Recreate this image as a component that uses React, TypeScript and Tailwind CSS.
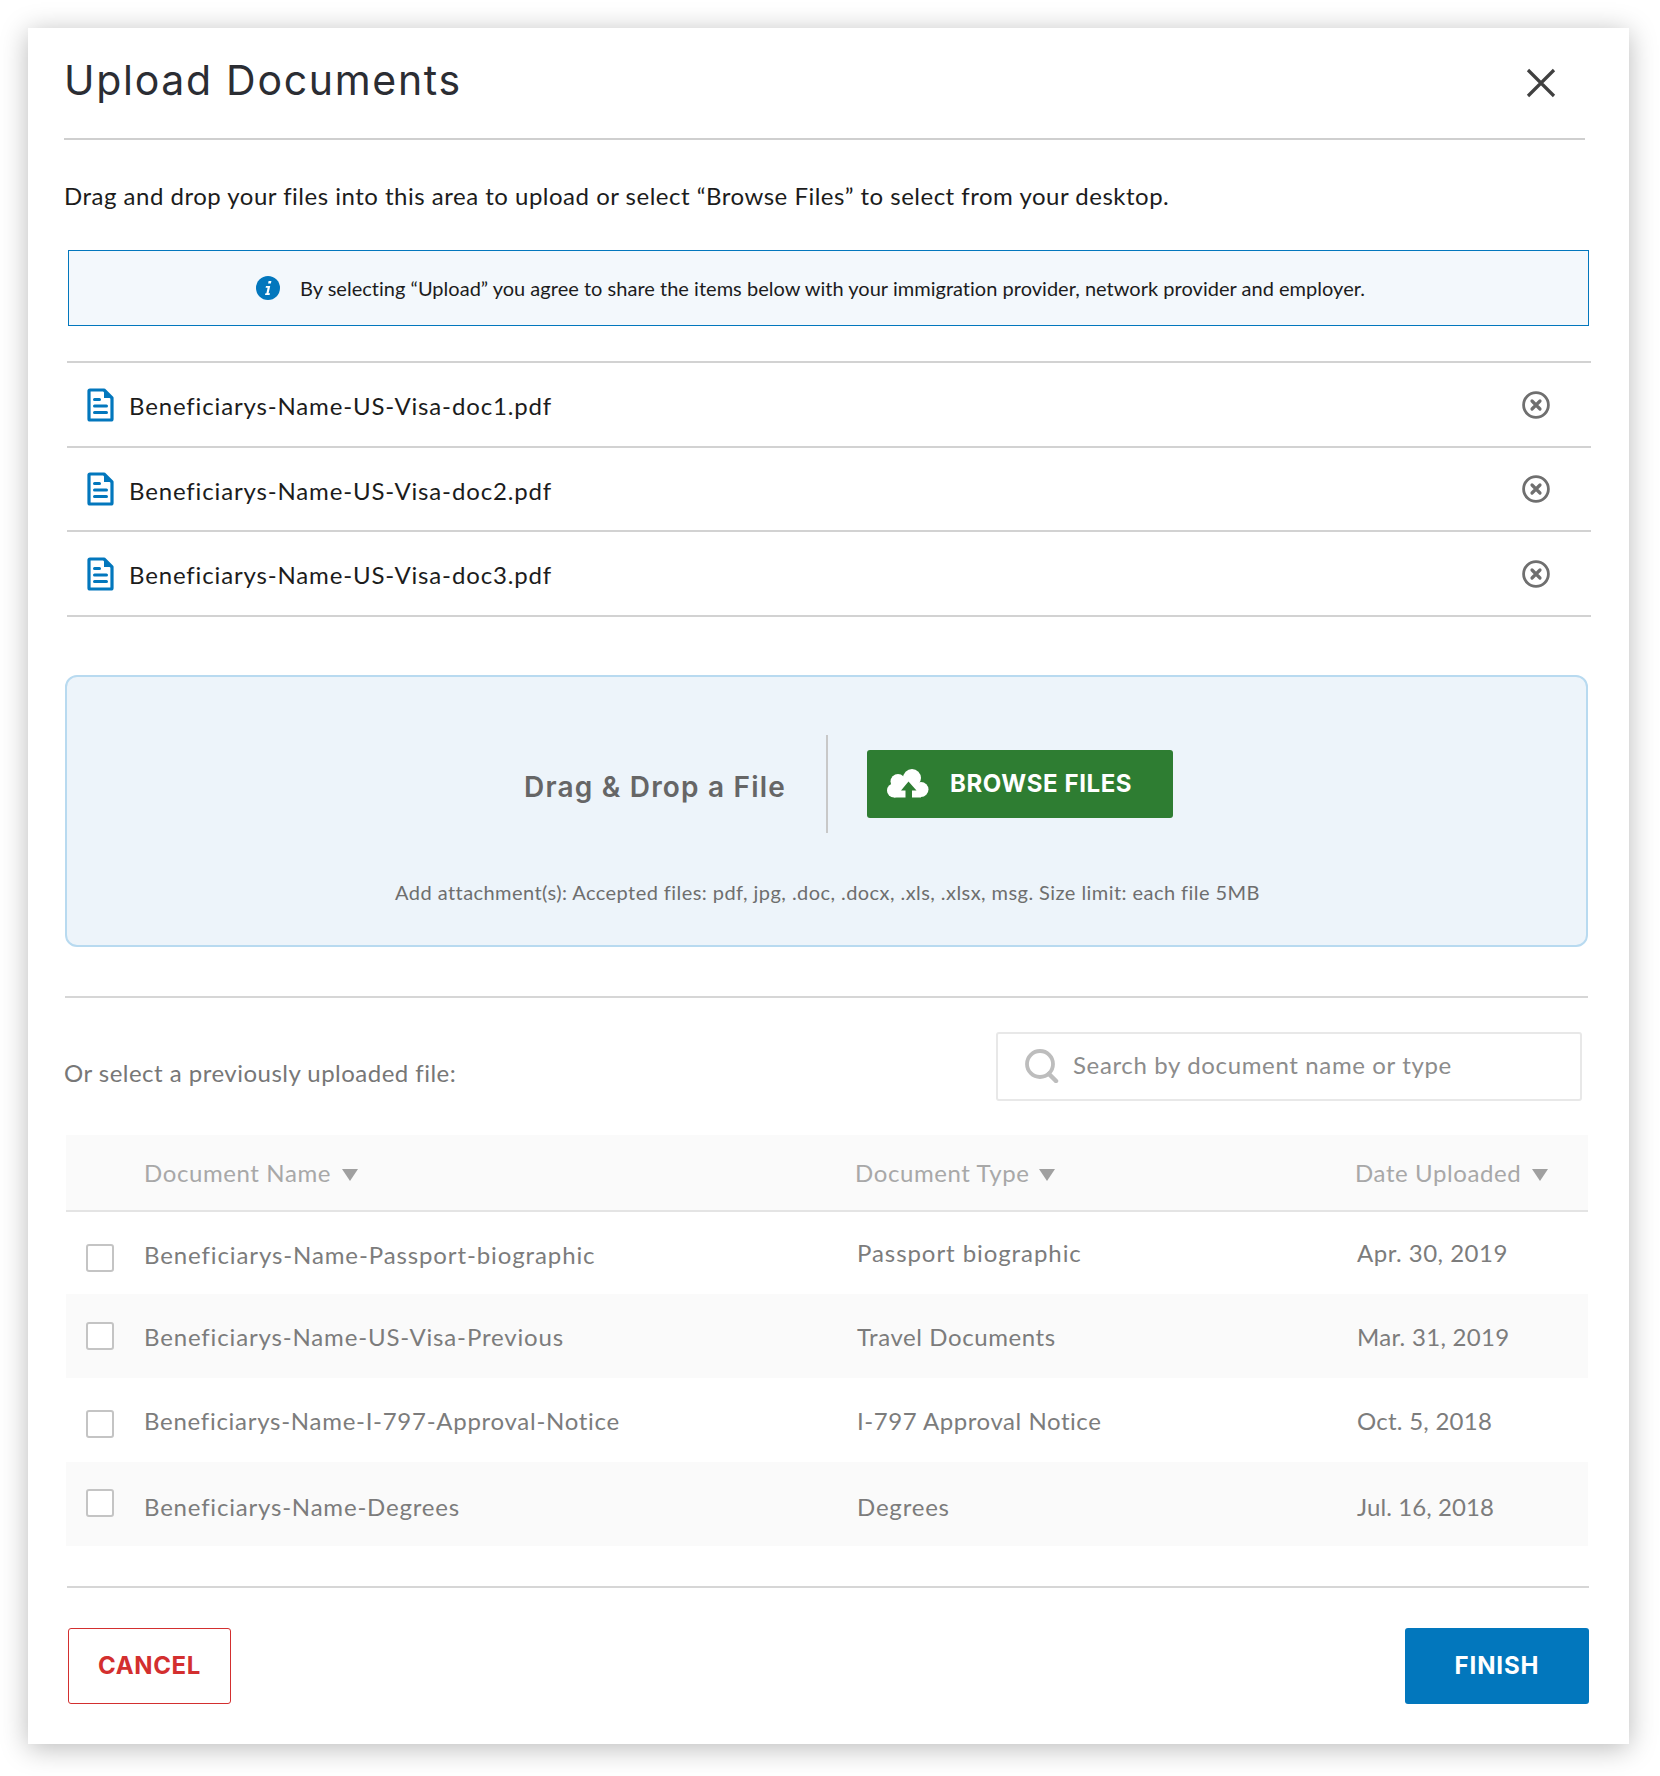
const body = "font-['Lato','Open_Sans',sans-serif]";

function DocIcon() {
  return (
    <svg width="27" height="34" viewBox="0 0 27 34" fill="none" className="block mt-[1px]">
      <path d="M3 2H17L25 10V31a1 1 0 0 1-1 1H3a1 1 0 0 1-1-1V3a1 1 0 0 1 1-1Z" stroke="#0277bd" strokeWidth="3.2" strokeLinejoin="round" />
      <path d="M17 2L25 10H17Z" fill="#0277bd" />
      <path d="M7.500 11.500H12.500M7.500 18H19.500M7.500 24.500H19.500" stroke="#0277bd" strokeWidth="3" strokeLinecap="round" />
    </svg>
  );
}

function RemoveIcon() {
  return (
    <svg width="28" height="28" viewBox="0 0 28 28" fill="none" className="mt-[1px]">
      <circle cx="14" cy="14" r="12.400" stroke="#6f6f6f" strokeWidth="2.800" />
      <path d="M10 10L18 18M18 10L10 18" stroke="#6f6f6f" strokeWidth="3.200" strokeLinecap="round" />
    </svg>
  );
}

function Arrow() {
  return <svg width="16" height="12" viewBox="0 0 16 12" className="shrink-0 mt-[4px]"><path d="M0 0H16L8 12Z" fill="#a0a0a0" /></svg>;
}

const files = ["Beneficiarys-Name-US-Visa-doc1.pdf", "Beneficiarys-Name-US-Visa-doc2.pdf", "Beneficiarys-Name-US-Visa-doc3.pdf"];

const rows = [
  { name: "Beneficiarys-Name-Passport-biographic", type: "Passport biographic", date: "Apr. 30, 2019", row: "h-[82px] bg-white", box: "mt-[10px]", nameCell: "mt-[4px] tracking-[0.89px]", typeCell: "tracking-[0.93px]", dateCell: "tracking-[0.5px]" },
  { name: "Beneficiarys-Name-US-Visa-Previous", type: "Travel Documents", date: "Mar. 31, 2019", row: "h-[84px] bg-[#fafafa]", box: "", nameCell: "mt-[2px] tracking-[0.85px]", typeCell: "mt-[2px] tracking-[0.58px]", dateCell: "mt-[2px] tracking-[0.3px]" },
  { name: "Beneficiarys-Name-I-797-Approval-Notice", type: "I-797 Approval Notice", date: "Oct. 5, 2018", row: "h-[84px] bg-white", box: "mt-[8px]", nameCell: "mt-[2px] tracking-[0.72px]", typeCell: "mt-[2px] tracking-[0.55px]", dateCell: "mt-[2px] tracking-[0.25px]" },
  { name: "Beneficiarys-Name-Degrees", type: "Degrees", date: "Jul. 16, 2018", row: "h-[84px] bg-[#fafafa]", box: "mt-[-2px]", nameCell: "mt-[6px] tracking-[0.8px]", typeCell: "mt-[6px] tracking-[0.8px]", dateCell: "mt-[6px] tracking-[0.1px]" },
];

export default function App() {
  return (
    <div className={`bg-white w-[1660px] h-[1776px] pt-7 pl-7 ${body}`}>
      <div className="w-[1601px] h-[1716px] bg-white shadow-[0_4px_26px_rgba(0,0,0,0.28)] pl-9 pr-10 flex flex-col">
        <div className="h-[112px] w-[1521px] border-b-2 border-[#cfcfcf] flex justify-between pt-[28px] shrink-0">
          <h1 className="text-[41px] leading-[48px] font-['Inter',sans-serif] font-normal tracking-[1.7px] text-[#2b2d33]">Upload Documents</h1>
          <svg width="30" height="30" viewBox="0 0 30 30" className="mt-[12px] mr-[29px]" fill="none">
            <path d="M2 2L28 28M28 2L2 28" stroke="#404040" strokeWidth="3.2" />
          </svg>
        </div>

        <p className="mt-[40px] h-8 text-2xl leading-8 tracking-[0.5px] text-[#1c1c1c]">Drag and drop your files into this area to upload or select “Browse Files” to select from your desktop.</p>

        <div className="mt-[38px] ml-1 w-[1521px] h-[76px] border border-[#0277bd] bg-[#f3f8fc] flex items-center pl-[187px] gap-[20px] shrink-0">
          <svg width="24" height="24" viewBox="0 0 24 24" className="shrink-0">
            <circle cx="12" cy="12" r="12" fill="#0277bd" />
            <path d="M12.600 5h2.800l-.5 2.600h-2.800ZM10 10h4.200l-1.600 7.200h1.400l-.4 1.800H9l.4-1.800h1l1.200-5.400H9.600Z" fill="#fff" />
          </svg>
          <span className="text-[20px] leading-6 tracking-[0.02px] text-[#1c1c1c]">By selecting “Upload” you agree to share the items below with your immigration provider, network provider and employer.</span>
        </div>

        <div className="mt-[35px] ml-[3px] w-[1524px] border-t-2 border-[#d2d2d2] shrink-0">
          {files.map((f) => (
            <div key={f} className="h-[84.6px] border-b-2 border-[#d2d2d2] flex items-center pl-5 pr-[41px]">
              <DocIcon />
              <span className="ml-[15px] text-2xl tracking-[0.85px] text-[#1c1c1c] flex-1 mt-[4px]">{f}</span>
              <RemoveIcon />
            </div>
          ))}
        </div>

        <div className="mt-[58px] ml-[1px] w-[1523px] h-[272px] rounded-[12px] border-2 border-[#b8daf0] bg-[#edf4fa] flex flex-col items-center shrink-0">
          <div className="mt-[58px] h-[98px] flex items-center w-full pl-[457px]">
            <span className="w-[302px] text-[28px] tracking-[1.2px] text-[#666666] mt-[6px] font-['Inter',sans-serif] font-semibold">Drag &amp; Drop a File</span>
            <div className="w-[2px] h-[98px] bg-[#c8c8c8]" />
            <button className="ml-[39px] w-[306px] h-[68px] rounded-[3px] bg-[#2e7d32] flex items-center pl-5 text-white">
              <svg width="42" height="29" viewBox="0 0 42 29" className="shrink-0">
                <g fill="#fff">
                  <circle cx="11" cy="12.500" r="7.500" />
                  <circle cx="25" cy="9" r="9" />
                  <circle cx="34" cy="20.500" r="7.500" />
                  <circle cx="7" cy="21.500" r="7" />
                  <path d="M7 14H34V28.500H7Z" />
                </g>
                <path d="M21.500 12.500 14 21.500h4.500V29h6.500v-7.500H29.500Z" fill="#2e7d32" />
              </svg>
              <span className="ml-[21px] text-[24px] font-['Inter',sans-serif] font-bold tracking-[0.6px] leading-none">BROWSE FILES</span>
            </button>
          </div>
          <p className="mt-[47px] pl-[2px] text-[20px] leading-6 tracking-[0.44px] text-[#6e6e6e]">Add attachment(s): Accepted files: pdf, jpg, .doc, .docx, .xls, .xlsx, msg. Size limit: each file 5MB</p>
        </div>

        <div className="mt-[49px] ml-[1px] w-[1523px] h-[2px] bg-[#d6d6d6] shrink-0" />

        <div className="mt-[34px] flex shrink-0 h-[70px]">
          <span className="w-[932px] mt-[25px] text-2xl leading-8 tracking-[0.48px] text-[#777777]">Or select a previously uploaded file:</span>
          <div className="w-[586px] h-[69px] rounded-[3px] border-2 border-[#e8e8e8] bg-white flex items-center pl-[27px]">
            <svg width="34" height="34" viewBox="0 0 34 34" fill="none" className="shrink-0">
              <circle cx="15" cy="15" r="13" stroke="#bdbdbd" strokeWidth="3.800" />
              <path d="M24 25L31 32" stroke="#bdbdbd" strokeWidth="4.500" strokeLinecap="round" />
            </svg>
            <span className="ml-[14px] mb-[2px] text-2xl tracking-[0.64px] text-[#8c8c8c]">Search by document name or type</span>
          </div>
        </div>

        <div className="mt-[33px] ml-[2px] w-[1522px] shrink-0">
          <div className="h-[77px] pt-[2px] bg-[#fafafa] border-b-2 border-[#e4e4e4] grid grid-cols-[78px_711px_500px_233px] items-center text-2xl text-[#a8a8a8] tracking-[0.6px]">
            <div />
            <div className="flex items-center gap-[11px]"><span>Document Name</span><Arrow /></div>
            <div className="flex items-center gap-[9px]"><span>Document Type</span><Arrow /></div>
            <div className="flex items-center gap-[11px]"><span>Date Uploaded</span><Arrow /></div>
          </div>
          {rows.map((r) => (
            <div key={r.name} className={`${r.row} grid grid-cols-[78px_713px_500px_231px] items-center text-2xl text-[#7c7c7c]`}>
              <div className={`ml-5 w-7 h-7 rounded-[3px] border-2 border-[#c4c4c4] bg-white ${r.box}`} />
              <div className={r.nameCell}>{r.name}</div>
              <div className={r.typeCell}>{r.type}</div>
              <div className={r.dateCell}>{r.date}</div>
            </div>
          ))}
        </div>

        <div className="mt-[40px] ml-[3px] w-[1522px] h-[2px] bg-[#d6d6d6] shrink-0" />

        <div className="mt-[40px] ml-1 w-[1521px] flex justify-between shrink-0">
          <button className="w-[163px] h-[76px] rounded-[3px] border-[1.5px] border-[#d32f2f] bg-white text-[24px] font-['Inter',sans-serif] font-bold tracking-[0.6px] text-[#d32f2f]">CANCEL</button>
          <button className="w-[184px] h-[76px] rounded-[3px] bg-[#0277bd] text-[24px] font-['Inter',sans-serif] font-bold tracking-[0.9px] text-white">FINISH</button>
        </div>
      </div>
    </div>
  );
}
